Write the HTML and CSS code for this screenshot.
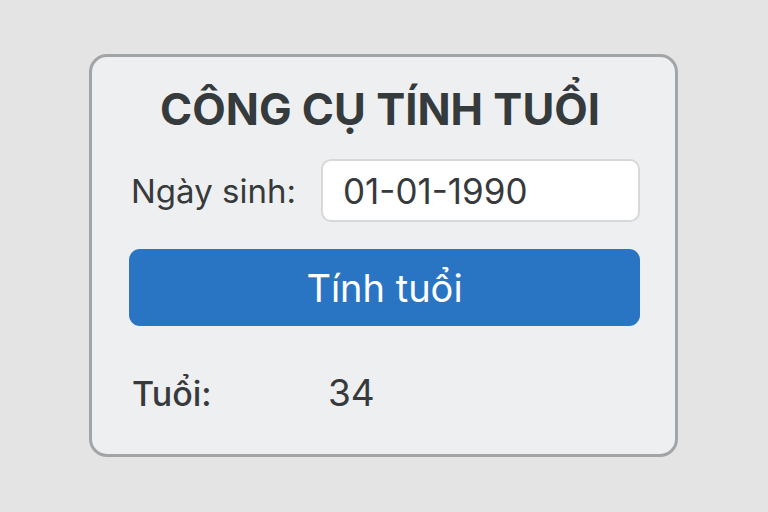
FILE: index.html
```html
<!DOCTYPE html>
<html lang="vi">
<head>
<meta charset="UTF-8">
<meta name="viewport" content="width=device-width, initial-scale=1.0">
<title>Công cụ tính tuổi</title>
<link rel="stylesheet" href="styles.css">
</head>
<body>

<div class="container">
  <h2>CÔNG CỤ TÍNH TUỔI</h2>
  <form id="ageForm" class="age-form" onsubmit="calcAge(event)">
    <div class="row">
      <label for="birthDate">Ngày sinh:</label>
      <input type="text" id="birthDate" name="birthDate" value="01-01-1990">
    </div>
    <button type="submit" class="btn">Tính tuổi</button>
    <div class="result">
      <span class="result-label">Tuổi:</span>
      <span id="age" class="result-value">34</span>
    </div>
  </form>
</div>

<script>
  function calcAge(event) {
    event.preventDefault();
    const parts = document.getElementById("birthDate").value.split("-");
    const born = new Date(parts[2], parts[1] - 1, parts[0]);
    const now = new Date();
    let age = now.getFullYear() - born.getFullYear();
    if (now < new Date(now.getFullYear(), born.getMonth(), born.getDate())) {
      age--;
    }
    document.getElementById("age").textContent = age;
  }
</script>

</body>
</html>
```

FILE: styles.css
```css
body {
  font-family: Inter, "Noto Sans", sans-serif;
  margin: 0;
  padding: 0;
  background-color: #e4e4e4;
  color: #363a3c;
}
.container {
  width: 589px;
  height: 403px;
  margin: 54px 0 0 89px;
  padding: 0 35px 0 37px;
  box-sizing: border-box;
  background-color: #eeeff0;
  border: 3px solid #a2a5a7;
  border-radius: 18px;
}
h2 {
  text-align: center;
  font-size: 43.5px;
  font-weight: 700;
  margin: 27px 9px 0 0;
  line-height: 50px;
  color: #353a3c;
}
.age-form {
  display: flex;
  flex-direction: column;
}
.row {
  display: flex;
  align-items: center;
  margin-top: 25px;
}
label {
  font-size: 33px;
  width: 190px;
  padding-left: 2px;
}
input[type="text"] {
  width: 319px;
  height: 63px;
  padding: 0 20px;
  font-family: inherit;
  font-size: 35px;
  color: #363a3c;
  border: 2px solid #d6d8d9;
  border-radius: 10px;
  background-color: #fff;
  box-sizing: border-box;
}
.btn {
  margin-top: 27px;
  height: 77px;
  width: 511px;
  font-family: inherit;
  font-size: 38px;
  color: #fff;
  background-color: #2a74c4;
  border: none;
  border-radius: 11px;
  cursor: pointer;
}
.result {
  display: flex;
  align-items: baseline;
  margin-top: 44px;
  font-size: 34px;
  padding-left: 3px;
}
.result-label {
  width: 196px;
  font-weight: 500;
}
.result-value {
  font-size: 37px;
}
```
